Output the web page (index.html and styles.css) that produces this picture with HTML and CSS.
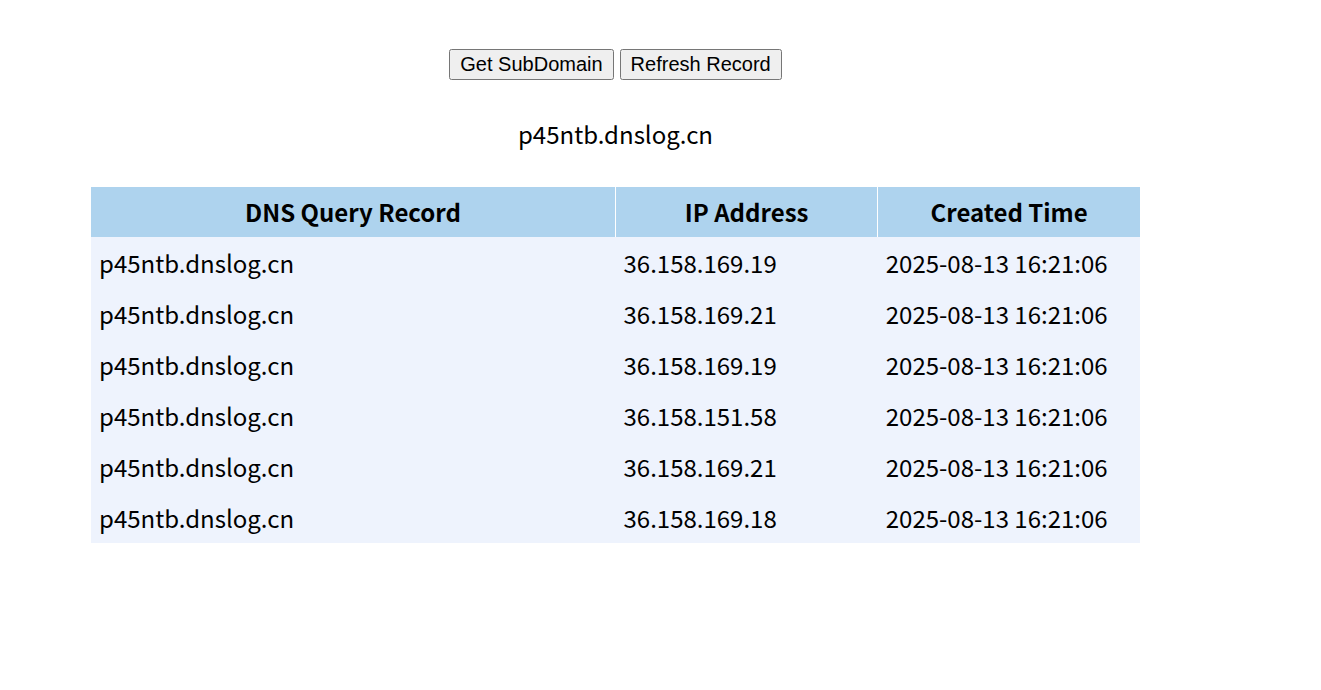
FILE: index.html
```html
<!DOCTYPE html>
<html>
<head>
<meta charset="utf-8">
<title>DNSLog</title>
<link rel="stylesheet" href="styles.css">
</head>
<body>
<div class="wrap">
  <div class="actions">
    <button class="btn">Get SubDomain</button>
    <button class="btn">Refresh Record</button>
  </div>
  <div class="domain">p45ntb.dnslog.cn</div>
  <table class="records">
    <thead>
      <tr><th class="c1">DNS Query Record</th><th class="c2">IP Address</th><th class="c3">Created Time</th></tr>
    </thead>
    <tbody>
      <tr><td>p45ntb.dnslog.cn</td><td>36.158.169.19</td><td>2025-08-13 16:21:06</td></tr>
      <tr><td>p45ntb.dnslog.cn</td><td>36.158.169.21</td><td>2025-08-13 16:21:06</td></tr>
      <tr><td>p45ntb.dnslog.cn</td><td>36.158.169.19</td><td>2025-08-13 16:21:06</td></tr>
      <tr><td>p45ntb.dnslog.cn</td><td>36.158.151.58</td><td>2025-08-13 16:21:06</td></tr>
      <tr><td>p45ntb.dnslog.cn</td><td>36.158.169.21</td><td>2025-08-13 16:21:06</td></tr>
      <tr><td>p45ntb.dnslog.cn</td><td>36.158.169.18</td><td>2025-08-13 16:21:06</td></tr>
    </tbody>
  </table>
</div>
</body>
</html>
```
FILE: styles.css
```css
body {
  margin: 8px;
  background: #fff;
  color: #000;
  font-family: "Noto Sans CJK SC", "Noto Sans", sans-serif;
}
.wrap {
  width: 1215px;
  padding-top: 41px;
}
.actions {
  text-align: center;
  font-size: 0;
}
.btn {
  font-family: "Liberation Sans", Arial, sans-serif;
  font-size: 20px;
  padding: 2px 9px;
  margin: 0 3px;
}
.domain {
  text-align: center;
  font-size: 24px;
  line-height: 32px;
  margin-top: 38px;
}
.records {
  width: 1049px;
  margin: 37px auto 0;
  border-collapse: collapse;
  font-size: 24px;
}
.records th {
  background: #aed3ee;
  font-weight: bold;
  line-height: 30px;
  padding: 10px 8px;
  text-align: center;
  border-left: 1px solid #fff;
}
.records th.c1 { border-left: none; width: 50%; }
.records th.c2, .records th.c3 { width: 25%; }
.records td {
  background: #eef3fd;
  line-height: 31px;
  padding: 10px 8px;
  text-align: left;
}
```
